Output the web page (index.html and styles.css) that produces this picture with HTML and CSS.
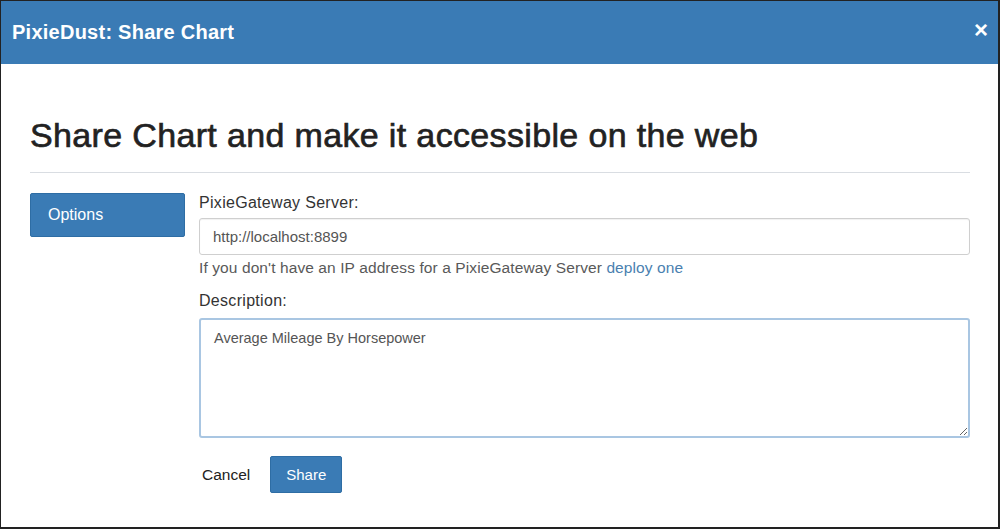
FILE: index.html
```html
<!DOCTYPE html>
<html>
<head>
<meta charset="utf-8">
<link rel="stylesheet" href="styles.css">
</head>
<body>
<div class="frame">
  <header class="modal-header">
    <h1 class="modal-title">PixieDust: Share Chart</h1>
    <span class="close">&times;</span>
  </header>
  <main class="modal-body">
    <h2 class="heading">Share Chart and make it accessible on the web</h2>
    <hr class="divider">
    <div class="content">
      <nav class="sidebar">
        <div class="tab active">Options</div>
      </nav>
      <form class="form">
        <label class="label">PixieGateway Server:</label>
        <input class="input" type="text" value="http://localhost:8899">
        <p class="help">If you don't have an IP address for a PixieGateway Server <a class="link" href="#">deploy one</a></p>
        <label class="label label-desc">Description:</label>
        <textarea class="textarea">Average Mileage By Horsepower</textarea>
        <div class="actions">
          <button type="button" class="btn-cancel">Cancel</button>
          <button type="button" class="btn-share">Share</button>
        </div>
      </form>
    </div>
  </main>
</div>
</body>
</html>
```

FILE: styles.css
```css
* { box-sizing: border-box; }
html, body { margin: 0; padding: 0; background: #fff; }
body { font-family: "Liberation Sans", Arial, sans-serif; }

.frame {
  width: 1000px;
  height: 529px;
  border-top: 1px solid #222;
  border-left: 1px solid #222;
  border-right: 2px solid #222;
  border-bottom: 2px solid #222;
  overflow: hidden;
  display: flex;
  flex-direction: column;
}

.modal-header {
  height: 63px;
  background: #3a7bb5;
  display: flex;
  align-items: center;
  justify-content: space-between;
  padding: 0 10px 0 11px;
  flex: none;
}
.modal-title {
  margin: 0;
  color: #fff;
  font-size: 20px;
  font-weight: bold;
  letter-spacing: 0.25px;
}
.close {
  color: #fff;
  font-size: 24px;
  font-weight: bold;
  line-height: 1;
  margin-top: -5px;
}

.modal-body {
  padding: 0 28px 0 29px;
}
.heading {
  margin: 51px 0 0 0;
  font-size: 34px;
  font-weight: normal;
  color: #222;
  line-height: 40px;
  letter-spacing: 0.35px;
  -webkit-text-stroke: 0.65px #222;
}
.divider {
  margin: 17px 0 0 0;
  border: 0;
  border-top: 1px solid #d9dde2;
  height: 0;
}

.content {
  display: flex;
  margin-top: 20px;
  gap: 14px;
}
.sidebar { width: 155px; flex: none; }
.tab {
  height: 44px;
  background: #3a7bb5;
  color: #fff;
  border: 1px solid #2e6da4;
  border-radius: 2px;
  font-size: 16px;
  display: flex;
  align-items: center;
  padding-left: 17px;
}

.form {
  flex: 1;
  display: flex;
  flex-direction: column;
  margin: 0;
}
.label {
  font-size: 16px;
  letter-spacing: 0.3px;
  color: #333;
  line-height: 18px;
  margin-top: 1px;
}
.label-desc { margin-top: 15px; }
.input {
  margin-top: 6px;
  height: 37px;
  width: 771px;
  border: 1px solid #cfcfcf;
  border-radius: 3px;
  padding: 0 13px;
  font-family: "Liberation Sans", Arial, sans-serif;
  font-size: 15px;
  color: #555;
  box-shadow: inset 0 1px 1px rgba(0,0,0,0.06);
}
.help {
  margin: 4px 0 0 0;
  font-size: 15.5px;
  letter-spacing: 0.1px;
  color: #595959;
  line-height: 18px;
}
.link { color: #4a7fb0; text-decoration: none; }

.textarea {
  margin-top: 8px;
  width: 771px;
  height: 120px;
  border: 2px solid #a9c6e2;
  border-radius: 3px;
  padding: 10px 13px;
  font-family: "Liberation Sans", Arial, sans-serif;
  font-size: 14.5px;
  color: #555;
  resize: both;
  outline: none;
}

.actions {
  display: flex;
  align-items: center;
  gap: 20px;
  margin-top: 18px;
}
.btn-cancel {
  background: none;
  border: 0;
  padding: 0 0 0 3px;
  font-family: "Liberation Sans", Arial, sans-serif;
  font-size: 15.5px;
  color: #222;
}
.btn-share {
  height: 37px;
  width: 72px;
  background: #3a7bb5;
  border: 1px solid #2e6da4;
  border-radius: 2px;
  color: #fff;
  font-family: "Liberation Sans", Arial, sans-serif;
  font-size: 15px;
  padding: 0;
}
```
